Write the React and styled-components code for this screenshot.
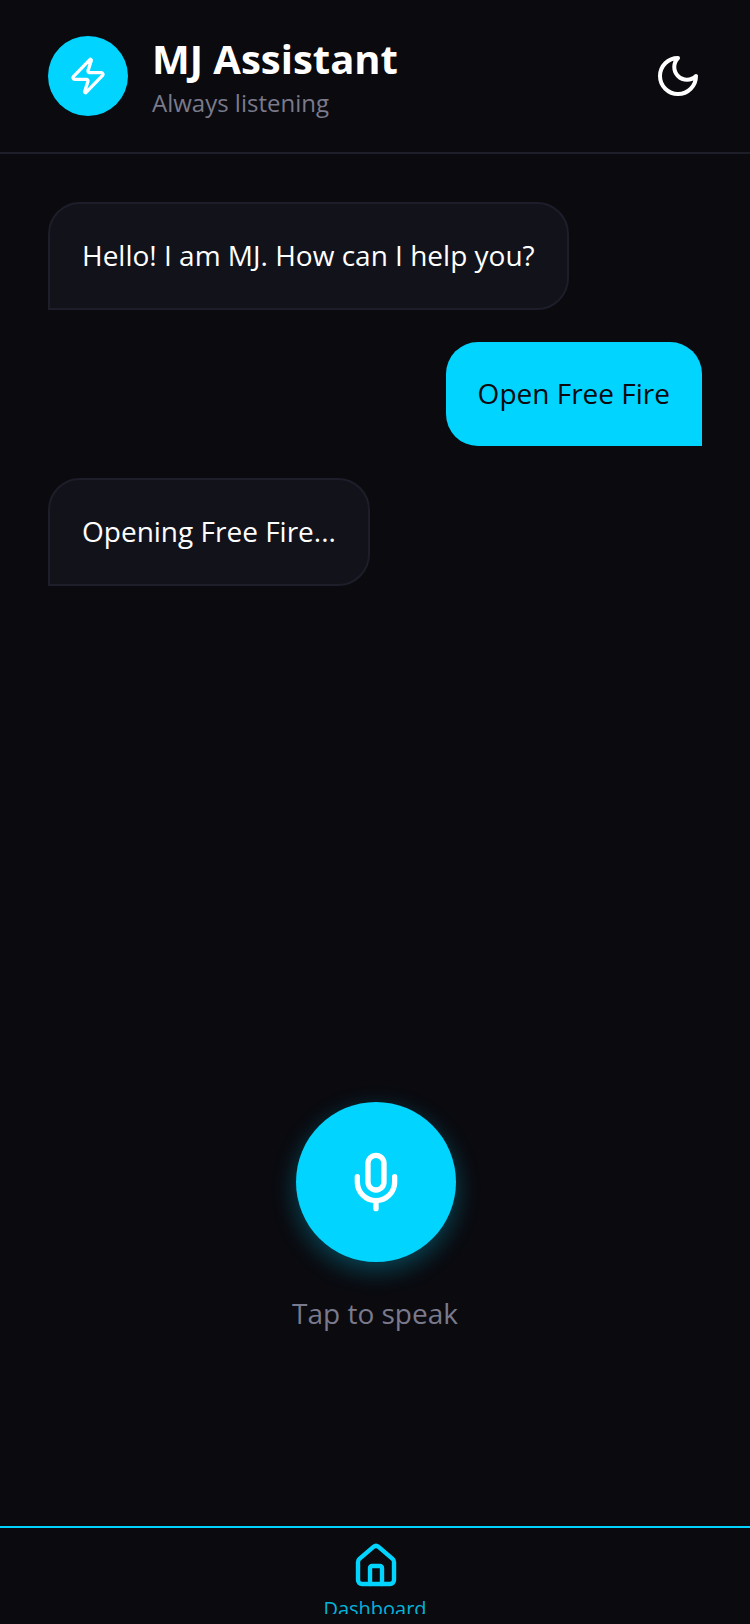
import React from 'react';
import styled, { createGlobalStyle } from 'styled-components';
import { Zap, Mic, House } from 'lucide-react';

const Global = createGlobalStyle`
  html, body { margin: 0; padding: 0; background: #0a0a0f; }
  * { box-sizing: border-box; }
`;
const Page = styled.div`
  width: 750px; height: 1624px; display: flex; flex-direction: column;
  background: #0a0a0f; color: #fff; overflow: hidden;
  font-family: "Open Sans", sans-serif;
`;
const Header = styled.header`
  height: 154px; flex: none; display: flex; align-items: center; gap: 24px;
  padding: 0 48px; background: #0a0a0f; border-bottom: 2px solid #1e1e2a;
`;
const Logo = styled.div`
  width: 80px; height: 80px; border-radius: 50%; background: #00d4ff;
  display: flex; align-items: center; justify-content: center; color: #fff; flex: none;
`;
const TitleBlock = styled.div`flex: 1; display: flex; flex-direction: column; gap: 4px; padding-top: 2px;`;
const Title = styled.h1`margin: 0; font-size: 40px; line-height: 48px; font-weight: 700;`;
const Subtitle = styled.p`margin: 0; font-size: 24px; line-height: 32px; color: #7a7a8c;`;
const ThemeButton = styled.button`
  width: 48px; height: 48px; padding: 0; border: 0; background: none; color: #fff; display: flex;
`;
const Messages = styled.main`
  height: 1372px; flex: none; display: flex; flex-direction: column; gap: 32px; padding: 48px 48px 0;
`;
const Bubble = styled.div`
  font-size: 28px; line-height: 40px; padding: 31px 32px 33px;
  border-radius: ${p => p.$user ? '32px 32px 0 32px' : '32px 32px 32px 0'};
  align-self: ${p => p.$user ? 'flex-end' : 'flex-start'};
  background: ${p => p.$user ? '#00d4ff' : '#12121a'};
  color: ${p => p.$user ? '#0a0a0f' : '#fff'};
  border: ${p => p.$user ? 'none' : '2px solid #1e1e2a'};
`;
const Speak = styled.div`
  display: flex; flex-direction: column; align-items: center; gap: 31px; margin: auto 0 193px 2px;
`;
const MicButton = styled.button`
  width: 160px; height: 160px; padding: 0; border: 0; border-radius: 50%;
  background: #00d4ff; color: #fff; display: flex; align-items: center; justify-content: center;
  box-shadow: 0 8px 24px rgba(0, 212, 255, .3);
`;
const Hint = styled.div`font-size: 28px; line-height: 40px; color: #7a7a8c; margin-left: -2px;`;
const Nav = styled.nav`
  flex: 1; display: flex; justify-content: center; padding-top: 14px;
  background: #0a0a0f; border-top: 2px solid #00d4ff;
`;
const NavItem = styled.div`
  height: 72px; overflow: hidden; display: flex; flex-direction: column; align-items: center; gap: 5px; color: #00d4ff;
  svg { flex: none; margin-left: 2px; }
`;
const NavLabel = styled.span`font-size: 20px; line-height: 28px; color: rgba(0, 212, 255, .85);`;

const MoonIcon = () => (
  <svg width="48" height="48" viewBox="0 0 24 24" fill="none" stroke="currentColor" strokeWidth="2" strokeLinecap="round" strokeLinejoin="round">
    <path d="M12 3a6 6 0 0 0 9 9 9 9 0 1 1-9-9Z" />
  </svg>
);

export default function App() {
  return (
    <Page>
      <Global />
      <Header>
        <Logo><Zap size={40} strokeWidth={2} /></Logo>
        <TitleBlock>
          <Title>MJ Assistant</Title>
          <Subtitle>Always listening</Subtitle>
        </TitleBlock>
        <ThemeButton aria-label="Theme"><MoonIcon /></ThemeButton>
      </Header>
      <Messages>
        <Bubble>Hello! I am MJ. How can I help you?</Bubble>
        <Bubble $user>Open Free Fire</Bubble>
        <Bubble>Opening Free Fire...</Bubble>
        <Speak>
          <MicButton aria-label="Speak"><Mic size={64} strokeWidth={2} /></MicButton>
          <Hint>Tap to speak</Hint>
        </Speak>
      </Messages>
      <Nav>
        <NavItem>
          <House size={48} strokeWidth={2.2} />
          <NavLabel>Dashboard</NavLabel>
        </NavItem>
      </Nav>
    </Page>
  );
}
